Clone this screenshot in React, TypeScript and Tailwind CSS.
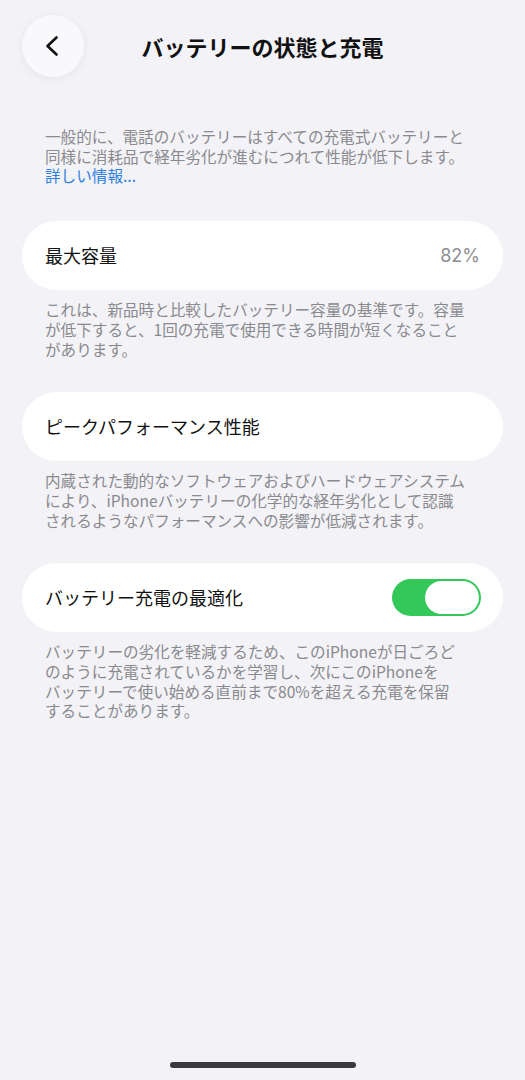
import { useState } from 'react';

const font = { fontFamily: '"Noto Sans CJK JP", "Noto Sans", sans-serif' };

function Footer({ lines }: { lines: string[] }) {
  return (
    <div className="px-[23px] pt-[10px] text-[15.6px] leading-[19.7px] text-[#8a8a8e] whitespace-nowrap">
      {lines.map((l, i) => (
        <div key={i}>{l}</div>
      ))}
    </div>
  );
}

function Card({ children }: { children: React.ReactNode }) {
  return (
    <div className="h-[69px] rounded-full bg-white flex items-center justify-between pl-[23px] pr-[22px]">
      {children}
    </div>
  );
}

export default function App() {
  const [optimized, setOptimized] = useState(true);

  return (
    <div style={font} className="w-[525px] h-[1080px] bg-[#f2f2f7] flex flex-col relative overflow-hidden">
      {/* header */}
      <div className="relative h-[92px] flex items-start px-[22px] pt-[15px]">
        <button className="w-[62px] h-[62px] rounded-full bg-[#f9f9fb] shadow-[0_2px_10px_rgba(0,0,0,0.06)] flex items-center justify-center">
          <svg width="16" height="22" viewBox="0 0 16 22" fill="none" className="mr-[2px]">
            <path d="M12.5 2.5 L3.5 11 L12.5 19.5" stroke="#111" strokeWidth="2.6" strokeLinecap="round" strokeLinejoin="round" />
          </svg>
        </button>
        <div className="absolute left-0 right-0 top-[30px] text-center text-[22px] leading-[32px] font-bold text-[#111] pointer-events-none">
          バッテリーの状態と充電
        </div>
      </div>

      <div className="px-[22px] flex flex-col">
        <div className="px-[23px] pt-[35px] text-[15.6px] leading-[19.7px] text-[#8a8a8e] whitespace-nowrap">
          <div>一般的に、電話のバッテリーはすべての充電式バッテリーと</div>
          <div>同様に消耗品で経年劣化が進むにつれて性能が低下します。</div>
          <div className="text-[#2f7fe0]">詳しい情報...</div>
        </div>

        <div className="mt-[35px]">
          <Card>
            <span className="text-[18px] font-normal text-[#111]">最大容量</span>
            <span className="text-[18px] text-[#8e8e93] pr-[1px]" style={{ fontFamily: '"Inter", "Noto Sans", sans-serif' }}>82%</span>
          </Card>
          <Footer
            lines={[
              'これは、新品時と比較したバッテリー容量の基準です。容量',
              'が低下すると、1回の充電で使用できる時間が短くなること',
              'があります。',
            ]}
          />
        </div>

        <div className="mt-[33px]">
          <Card>
            <span className="text-[18px] font-normal text-[#111]">ピークパフォーマンス性能</span>
          </Card>
          <Footer
            lines={[
              '内蔵された動的なソフトウェアおよびハードウェアシステム',
              'により、iPhoneバッテリーの化学的な経年劣化として認識',
              'されるようなパフォーマンスへの影響が低減されます。',
            ]}
          />
        </div>

        <div className="mt-[33px]">
          <Card>
            <span className="text-[18px] font-normal text-[#111]">バッテリー充電の最適化</span>
            <button
              onClick={() => setOptimized(!optimized)}
              className={`w-[89px] h-[37px] rounded-full p-[2px] flex items-center ${optimized ? 'bg-[#34c759] justify-end' : 'bg-[#e5e5ea] justify-start'}`}
            >
              <span className="w-[54px] h-[33px] rounded-full bg-white block" />
            </button>
          </Card>
          <Footer
            lines={[
              'バッテリーの劣化を軽減するため、このiPhoneが日ごろど',
              'のように充電されているかを学習し、次にこのiPhoneを',
              'バッテリーで使い始める直前まで80%を超える充電を保留',
              'することがあります。',
            ]}
          />
        </div>
      </div>

      <div className="absolute bottom-[12px] left-[170px] w-[186px] h-[6px] rounded-full bg-[#3a3a3c]" />
    </div>
  );
}
